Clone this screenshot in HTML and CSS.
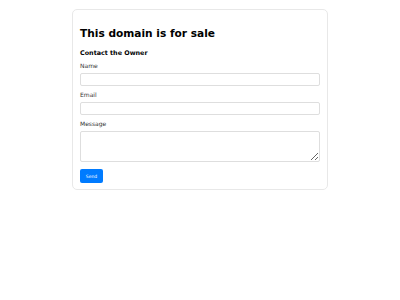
FILE: index.html
```html
<!DOCTYPE html>
<html lang="en">
<head>
    <meta charset="UTF-8">
    <meta name="viewport" content="width=device-width, initial-scale=1.0">
    <title>This domain is for sale</title>
    <link rel="stylesheet" href="styles.css">
</head>
<body>
    <div class="sale-box">
        <h1>This domain is for sale</h1>
        <h3>Contact the Owner</h3>
        <form class="contact-form">
            <div class="form-field">
                <label for="name">Name</label>
                <input type="text" id="name">
            </div>
            <div class="form-field">
                <label for="email">Email</label>
                <input type="email" id="email">
            </div>
            <div class="form-field">
                <label for="message">Message</label>
                <textarea id="message"></textarea>
            </div>
            <button type="button" class="send-btn">Send</button>
        </form>
    </div>
</body>
</html>
```

FILE: styles.css
```css
body {
    margin: 0;
    font-family: "DejaVu Sans", sans-serif;
    color: #000;
}
.sale-box {
    width: 240px;
    margin: 9px auto 0;
    padding: 7px 7px 6px;
    border: 1px solid #e8e8e8;
    border-radius: 5px;
    background-color: #fff;
}
h1 {
    font-size: 10.6px;
    line-height: 13px;
    margin: 9.5px 0 9px;
}
h3 {
    font-size: 6.4px;
    line-height: 8px;
    margin: 0 0 5px;
}
.form-field {
    margin-bottom: 5px;
}
.form-field label {
    display: block;
    font-size: 6px;
    line-height: 8px;
    margin-bottom: 3px;
    color: #333;
}
.form-field input,
.form-field textarea {
    display: block;
    box-sizing: border-box;
    width: 100%;
    height: 13px;
    margin: 0;
    padding: 2px 3px;
    border: 1px solid #dedede;
    border-radius: 2px;
    font-size: 6px;
}
.form-field textarea {
    height: 31px;
}
.send-btn {
    display: block;
    margin-top: 7.5px;
    width: 23px;
    height: 14px;
    padding: 0;
    border: none;
    border-radius: 2px;
    background-color: #007bff;
    color: #fff;
    font-family: "DejaVu Sans", sans-serif;
    font-size: 4.5px;
}
```
